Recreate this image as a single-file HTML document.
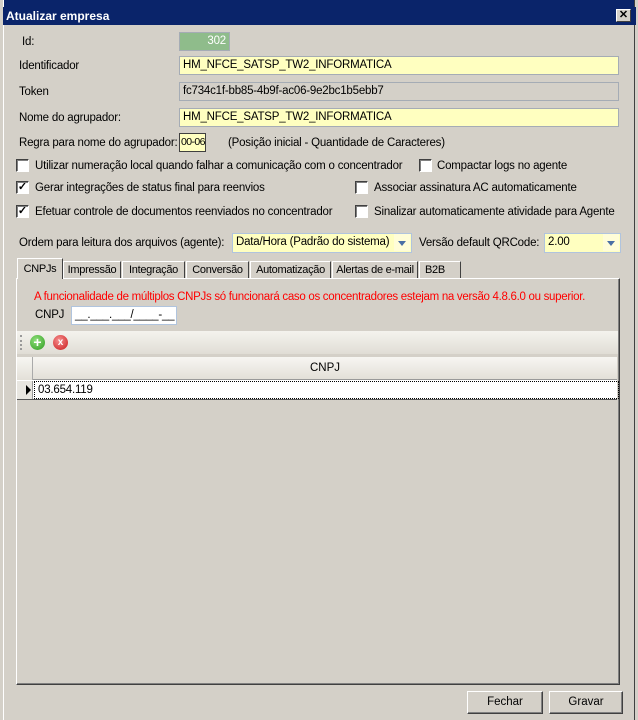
<!DOCTYPE html>
<html><head><style>
body{margin:0;width:638px;height:720px;overflow:hidden;background:#d4d0c8;font-family:"Liberation Sans",Arial,sans-serif;font-size:11.5px;color:#000;position:relative}
.a{position:absolute;white-space:nowrap;letter-spacing:-0.2px;margin-top:1px}
.f{position:absolute;border:1px solid #a5acb5;box-sizing:border-box;background:#ffffc0;padding:1px 3px;line-height:15px;white-space:nowrap;letter-spacing:-0.2px;overflow:hidden}
.cb{position:absolute;width:11px;height:11px;background:#fff;border:1px solid #404040;border-right-color:#fff;border-bottom-color:#fff;box-shadow:inset 1px 1px 0 #808080;font-size:11px;line-height:11px;text-align:center;font-weight:bold;margin-top:-1px}
.tab{position:absolute;top:261px;height:17px;border:1px solid #fff;border-right-color:#404040;border-bottom:none;box-sizing:border-box;padding:1px 2px;line-height:14px;letter-spacing:-0.3px;white-space:nowrap;overflow:hidden;font-size:11px;text-align:center}
.btn{position:absolute;border:1px solid #fff;border-right-color:#404040;border-bottom-color:#404040;box-shadow:inset -1px -1px 0 #808080;box-sizing:border-box;text-align:center;line-height:20px}
.arr{position:absolute;width:16px;height:17px;background:#fffdd8}
.arr:after{content:"";position:absolute;left:4px;top:7px;border:4px solid transparent;border-top:5px solid #4a6fa5;border-bottom:0}
</style></head><body>
<div style="position:absolute;left:0;top:0;width:638px;height:7px;background:#0a246a"></div>
<div style="position:absolute;left:0;top:0;width:3px;height:720px;background:#d4d0c8;border-right:1px solid #fff"></div>
<div style="position:absolute;right:0;top:0;width:3px;height:720px;background:#d4d0c8;border-left:1px solid #404040"></div>
<div style="position:absolute;left:3px;top:7px;width:630px;height:18px;background:#0a246a;color:#fff;font-weight:bold;font-size:12px;line-height:18px;padding-left:3px">Atualizar empresa</div>
<div style="position:absolute;left:616px;top:9px;width:15px;height:13px;background:#d4d0c8;border:1px solid #fff;border-right-color:#404040;border-bottom-color:#404040;box-sizing:border-box;font-size:11px;line-height:11px;text-align:center;font-weight:bold">✕</div>

<div class="a" style="left:22px;top:35px">Id:</div>
<div class="f" style="left:179px;top:32px;width:51px;height:19px;background:#8fbc8b;color:#fff;text-align:right">302</div>
<div class="a" style="left:19px;top:59px">Identificador</div>
<div class="f" style="left:179px;top:56px;width:440px;height:19px">HM_NFCE_SATSP_TW2_INFORMATICA</div>
<div class="a" style="left:19px;top:85px">Token</div>
<div class="f" style="left:179px;top:82px;width:440px;height:19px;background:#d4d0c8">fc734c1f-bb85-4b9f-ac06-9e2bc1b5ebb7</div>
<div class="a" style="left:19px;top:111px">Nome do agrupador:</div>
<div class="f" style="left:179px;top:108px;width:440px;height:19px">HM_NFCE_SATSP_TW2_INFORMATICA</div>
<div class="a" style="left:19px;top:136px">Regra para nome do agrupador:</div>
<div class="f" style="left:179px;top:133px;width:27px;height:19px;padding:1px 1px;border-color:#404040;letter-spacing:-0.6px;font-size:10.5px">00-06</div>
<div class="a" style="left:228px;top:136px">(Posição inicial - Quantidade de Caracteres)</div>

<div class="cb" style="left:16px;top:160px"></div><div class="a" style="left:35px;top:159px">Utilizar numeração local quando falhar a comunicação com o concentrador</div>
<div class="cb" style="left:419px;top:160px"></div><div class="a" style="left:437px;top:159px">Compactar logs no agente</div>
<div class="cb" style="left:16px;top:182px">✓</div><div class="a" style="left:35px;top:181px">Gerar integrações de status final para reenvios</div>
<div class="cb" style="left:355px;top:182px"></div><div class="a" style="left:374px;top:181px">Associar assinatura AC automaticamente</div>
<div class="cb" style="left:16px;top:206px">✓</div><div class="a" style="left:35px;top:205px">Efetuar controle de documentos reenviados no concentrador</div>
<div class="cb" style="left:355px;top:206px"></div><div class="a" style="left:374px;top:205px">Sinalizar automaticamente atividade para Agente</div>

<div class="a" style="left:19px;top:236px">Ordem para leitura dos arquivos (agente):</div>
<div class="f" style="left:232px;top:233px;width:180px;height:20px;border-color:#b0c4de">Data/Hora (Padrão do sistema)</div><div class="arr" style="left:394px;top:234px"></div>
<div class="a" style="left:419px;top:236px">Versão default QRCode:</div>
<div class="f" style="left:544px;top:233px;width:77px;height:20px;border-color:#b0c4de">2.00</div><div class="arr" style="left:603px;top:234px"></div>

<div style="position:absolute;left:16px;top:278px;width:604px;height:407px;border:1px solid #fff;border-right-color:#404040;border-bottom-color:#404040;box-sizing:border-box;box-shadow:inset -1px -1px 0 #808080"></div>
<div class="tab" style="left:17px;top:258px;height:21px;background:#d4d0c8;padding-top:3px;width:46px">CNPJs</div>
<div class="tab" style="left:63px;width:58px">Impressão</div>
<div class="tab" style="left:122px;width:63px">Integração</div>
<div class="tab" style="left:186px;width:63px">Conversão</div>
<div class="tab" style="left:250px;width:81px">Automatização</div>
<div class="tab" style="left:332px;width:86px">Alertas de e-mail</div>
<div class="tab" style="left:419px;width:42px;text-align:left;padding-left:5px">B2B</div>

<div class="a" style="left:34px;top:290px;color:#f00;letter-spacing:-0.3px">A funcionalidade de múltiplos CNPJs só funcionará caso os concentradores estejam na versão 4.8.6.0 ou superior.</div>
<div class="a" style="left:35px;top:308px">CNPJ</div>
<div class="f" style="left:71px;top:306px;width:106px;height:19px;background:#fff;border-color:#b0c4de">__.___.___/____-__</div>

<div style="position:absolute;left:17px;top:331px;width:601px;height:23px;background:linear-gradient(#f4f3ee,#e0ddd5)"></div>
<div style="position:absolute;left:20px;top:335px;width:1px;height:15px;border-left:2px dotted #999"></div>
<div style="position:absolute;left:30px;top:335px;width:15px;height:15px;border-radius:50%;background:radial-gradient(circle at 40% 35%,#8fe07a,#2e9a20);color:#fff;font-weight:bold;font-size:14px;line-height:15px;text-align:center">+</div>
<div style="position:absolute;left:53px;top:335px;width:15px;height:15px;border-radius:50%;background:radial-gradient(circle at 40% 35%,#f79090,#c81818);color:#fff;font-weight:bold;font-size:10px;line-height:15px;text-align:center">x</div>

<div style="position:absolute;left:17px;top:357px;width:600px;height:42px;background:#fff"></div>
<div style="position:absolute;left:17px;top:357px;width:15px;height:23px;background:linear-gradient(#f7f6f2,#e3e0d8);border-right:1px solid #aaa"></div>
<div style="position:absolute;left:33px;top:357px;width:584px;height:22px;background:linear-gradient(#f7f6f2,#e3e0d8);border-bottom:1px solid #999;text-align:center;line-height:23px">CNPJ</div>
<div style="position:absolute;left:17px;top:381px;width:15px;height:18px;background:#e8e6e0;border-right:1px solid #999"></div>
<div style="position:absolute;left:26px;top:385px;border:5px solid transparent;border-left:5px solid #000;border-right:0"></div>
<div class="a" style="left:34px;top:380px;width:580px;height:16px;border:1px dotted #000;line-height:16px;padding-left:3px">03.654.119</div>
<div style="position:absolute;left:17px;top:399px;width:600px;height:1px;background:#555"></div>

<div class="btn" style="left:467px;top:691px;width:76px;height:23px">Fechar</div>
<div class="btn" style="left:549px;top:691px;width:74px;height:23px">Gravar</div>
</body></html>
